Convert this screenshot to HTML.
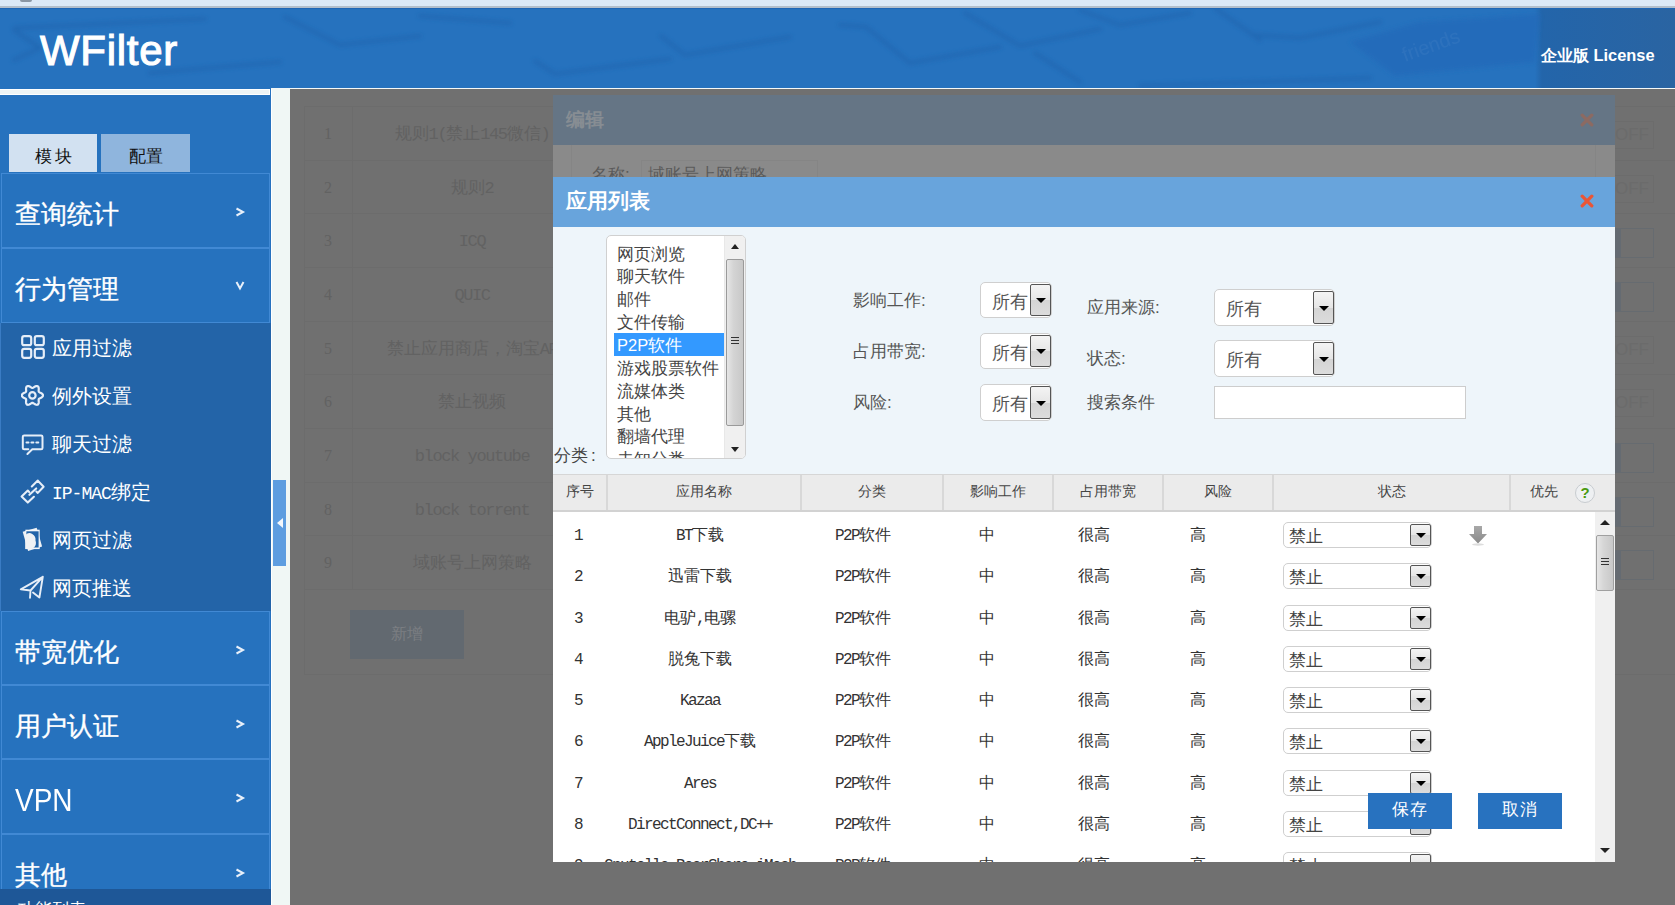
<!DOCTYPE html><html><head><meta charset="utf-8"><style>
*{margin:0;padding:0;box-sizing:border-box}
html,body{width:1675px;height:905px;overflow:hidden;background:#707070;font-family:"Liberation Sans",sans-serif}
.a{position:absolute}
.c{text-align:center;white-space:nowrap}
.l{font-family:"Liberation Mono",monospace;letter-spacing:-1.6px}
.sel{position:absolute;background:#fff;border:1px solid #cfcfcf;border-radius:5px}
.sel .btn{position:absolute;right:0;top:1px;bottom:1px;border:1px solid #555;border-radius:2px;background:linear-gradient(#f4f4f4,#e6e6e6 50%,#d4d4d4 51%,#dcdcdc)}
.sel .btn:after{content:"";position:absolute;left:50%;top:50%;margin-left:-5px;margin-top:-2px;border-left:5px solid transparent;border-right:5px solid transparent;border-top:5px solid #000}
.sel .v{position:absolute;color:#555;font-size:17px;white-space:nowrap}
</style></head><body>
<div class="a" style="left:0;top:0;width:1675px;height:6px;background:#dce9f7"></div>
<div class="a" style="left:0;top:6px;width:1675px;height:2px;background:#b3bfcc"></div>
<div class="a" style="left:20px;top:0;width:12px;height:1.5px;background:#8a96a4;border-radius:0 0 6px 6px"></div>
<div class="a" style="left:0;top:8px;width:1675px;height:80px;background:#2672be;overflow:hidden"><svg class="a" style="left:0;top:0" width="1675" height="80" viewBox="0 8 1675 80"><defs><filter id="bl" x="-10%" y="-50%" width="120%" height="200%"><feGaussianBlur stdDeviation="2"/></filter><linearGradient id="rg" x1="0" x2="1" y1="0" y2="0"><stop offset="0" stop-color="#2365aa" stop-opacity="0.0"/><stop offset="0.05" stop-color="#2365aa" stop-opacity="1"/><stop offset="1" stop-color="#2a64a2"/></linearGradient></defs><rect x="1535" y="8" width="140" height="80" fill="url(#rg)"/><path d="M1350 42 L1395 76 L1535 62 L1540 14 L1420 22 Z" fill="#2268b8" opacity="0.6" filter="url(#bl)"/><text x="1405" y="62" transform="rotate(-20 1405 62)" font-family="Liberation Sans" font-size="20" fill="#fff" opacity="0.045">friends</text><g fill="none" stroke="#1d5ea8" stroke-width="4" opacity="0.45" filter="url(#bl)" stroke-linecap="round"><path d="M14 30 L40 48 L14 60"/><path d="M15 28 L205 19"/><path d="M150 73 L280 62"/><path d="M285 17 L340 45 L420 36"/><path d="M420 16 L510 23"/><path d="M535 61 L555 74 L670 59"/><path d="M661 36 L685 55 L790 37"/><path d="M840 25 L866 27 L910 63 L1000 47"/><path d="M965 13 L1020 46 L1100 29"/><path d="M1080 10 L1120 25 L1190 13"/><path d="M1035 53 L1080 82"/><path d="M1215 8 L1260 40"/><path d="M1255 35 L1300 38 L1380 22"/><path d="M1140 86 L1370 78"/></g></svg><div class="a" style="left:0;top:0;width:1675px;height:1px;background:#1f66b5"></div></div>
<div class="a" style="left:40px;top:24.5px;font:42px/52px 'Liberation Sans';color:#fff;-webkit-text-stroke:1.1px #fff;letter-spacing:0.7px">WFilter</div>
<div class="a" style="left:1541px;top:45px;font:bold 16.4px/20px 'Liberation Sans';color:#fff">企业版 License</div>
<div class="a" style="left:271px;top:88px;width:1404px;height:1px;background:#f4f8f8"></div>
<div class="a" style="left:0;top:88px;width:271px;height:817px;background:#2672be"></div>
<div class="a" style="left:0;top:89px;width:270px;height:6px;background:#eef4f5;border:1px solid #fff;border-left:0"></div>
<div class="a" style="left:271px;top:89px;width:19px;height:816px;background:#f0f7f5;border-left:1px solid #fff"></div>
<div class="a" style="left:273px;top:480px;width:13px;height:86px;background:#5d9de0"></div>
<div class="a" style="left:277px;top:518px;width:0;height:0;border-top:5px solid transparent;border-bottom:5px solid transparent;border-right:6px solid #f4f8fc"></div>
<div class="a c" style="left:9px;top:134px;width:88px;height:38px;background:#d2e1f1;font-size:17px;line-height:45px;color:#111;letter-spacing:3px;text-indent:4px">模块</div>
<div class="a c" style="left:101px;top:134px;width:89px;height:38px;background:#8fb5dd;font-size:17px;line-height:45px;color:#111;text-indent:1px">配置</div>
<div class="a" style="left:1px;top:173px;width:269px;height:75px;border:1px solid #4189d4;background:#2672be"></div>
<div class="a" style="left:15px;top:199px;font-size:25.5px;line-height:30px;color:#fff;white-space:nowrap;-webkit-text-stroke:0.35px #fff">查询统计</div>
<svg class="a" style="left:234px;top:206px" width="12" height="12" viewBox="0 0 12 12"><path d="M2.5 2.5 L9 6 L2.5 9.5" fill="none" stroke="#e8f0fa" stroke-width="2"/></svg>
<div class="a" style="left:1px;top:248px;width:269px;height:75px;border:1px solid #4189d4;background:#2672be"></div>
<div class="a" style="left:15px;top:274px;font-size:25.5px;line-height:30px;color:#fff;white-space:nowrap;-webkit-text-stroke:0.35px #fff">行为管理</div>
<svg class="a" style="left:234px;top:279px" width="12" height="12" viewBox="0 0 12 12"><path d="M2.5 3 L6 9.5 L9.5 3" fill="none" stroke="#e8f0fa" stroke-width="2"/></svg>
<div class="a" style="left:0;top:323px;width:271px;height:288px;background:#2364a8;border-left:1px solid #3a7cc4"></div>
<div class="a" style="left:52px;top:336px;font-size:20px;line-height:24px;color:#fff;white-space:nowrap">应用过滤</div>
<div class="a" style="left:52px;top:384px;font-size:20px;line-height:24px;color:#fff;white-space:nowrap">例外设置</div>
<div class="a" style="left:52px;top:432px;font-size:20px;line-height:24px;color:#fff;white-space:nowrap">聊天过滤</div>
<div class="a" style="left:52px;top:480px;font-size:20px;line-height:24px;color:#fff;white-space:nowrap"><span style="font-family:'Liberation Mono';font-size:18px;letter-spacing:-1px">IP-MAC</span>绑定</div>
<div class="a" style="left:52px;top:528px;font-size:20px;line-height:24px;color:#fff;white-space:nowrap">网页过滤</div>
<div class="a" style="left:52px;top:576px;font-size:20px;line-height:24px;color:#fff;white-space:nowrap">网页推送</div>
<svg class="a" style="left:21px;top:335px" width="24" height="24" viewBox="0 0 24 24"><rect x="1.2" y="1.2" width="9" height="9" rx="2" fill="none" stroke="#e6eef8" stroke-width="2.2"/><rect x="13.8" y="1.2" width="9" height="9" rx="2" fill="none" stroke="#e6eef8" stroke-width="2.2"/><rect x="1.2" y="13.8" width="9" height="9" rx="2" fill="none" stroke="#e6eef8" stroke-width="2.2"/><rect x="13.8" y="13.8" width="9" height="9" rx="2" fill="none" stroke="#e6eef8" stroke-width="2.2"/></svg>
<svg class="a" style="left:21px;top:384px" width="23" height="23" viewBox="0 0 23 23"><path d="M22.00,11.40 L21.86,12.09 L21.44,12.72 L20.83,13.28 L20.09,13.73 L19.34,14.10 L18.67,14.41 L18.15,14.73 L17.81,15.10 L17.65,15.58 L17.64,16.19 L17.71,16.93 L17.76,17.76 L17.74,18.63 L17.57,19.44 L17.22,20.11 L16.70,20.58 L16.03,20.80 L15.28,20.76 L14.49,20.50 L13.73,20.09 L13.04,19.63 L12.43,19.20 L11.89,18.91 L11.40,18.80 L10.91,18.91 L10.37,19.20 L9.76,19.63 L9.07,20.09 L8.31,20.50 L7.52,20.76 L6.77,20.80 L6.10,20.58 L5.58,20.11 L5.23,19.44 L5.06,18.63 L5.04,17.76 L5.09,16.93 L5.16,16.19 L5.15,15.58 L4.99,15.10 L4.65,14.73 L4.13,14.41 L3.46,14.10 L2.71,13.73 L1.97,13.28 L1.36,12.72 L0.94,12.09 L0.80,11.40 L0.94,10.71 L1.36,10.08 L1.97,9.52 L2.71,9.07 L3.46,8.70 L4.13,8.39 L4.65,8.07 L4.99,7.70 L5.15,7.22 L5.16,6.61 L5.09,5.87 L5.04,5.04 L5.06,4.17 L5.23,3.36 L5.58,2.69 L6.10,2.22 L6.77,2.00 L7.52,2.04 L8.31,2.30 L9.07,2.71 L9.76,3.17 L10.37,3.60 L10.91,3.89 L11.40,4.00 L11.89,3.89 L12.43,3.60 L13.04,3.17 L13.73,2.71 L14.49,2.30 L15.28,2.04 L16.03,2.00 L16.70,2.22 L17.22,2.69 L17.57,3.36 L17.74,4.17 L17.76,5.04 L17.71,5.87 L17.64,6.61 L17.65,7.22 L17.81,7.70 L18.15,8.07 L18.67,8.39 L19.34,8.70 L20.09,9.07 L20.83,9.52 L21.44,10.08 L21.86,10.71 Z" fill="none" stroke="#e6eef8" stroke-width="2.2" stroke-width="1.9" stroke-linejoin="round"/><circle cx="11.4" cy="11.4" r="3.2" fill="none" stroke="#e6eef8" stroke-width="2.2" stroke-width="1.7"/></svg>
<svg class="a" style="left:15px;top:427px" width="35" height="35" viewBox="0 0 35 35"><path d="M13.3 22.3 H9.2 Q7.8 22.3 7.8 20.9 V9.8 Q7.8 8.4 9.2 8.4 H26.1 Q27.5 8.4 27.5 9.8 V20.9 Q27.5 22.3 26.1 22.3 H17.3 L12.4 27" fill="none" stroke="#e6eef8" stroke-width="2" stroke-linecap="round" stroke-linejoin="round"/><path d="M11.6 15.5 H13.4 M16.5 15.5 H18.3 M21.4 15.5 H23.2" stroke="#e6eef8" stroke-width="2.2" stroke-linecap="round"/></svg>
<svg class="a" style="left:15px;top:474px" width="35" height="35" viewBox="0 0 35 35"><g fill="none" stroke="#e6eef8" stroke-width="2.1" stroke-linejoin="round" stroke-linecap="round"><path d="M16.8 12.4 L22.8 6.6 L28.6 12.8 L22.8 18.9 L21.4 17.5"/><path d="M14.2 18 L12.8 16.6 L6.6 22.6 L12.8 28.6 L18.9 22.8"/><path d="M14.4 20.8 L21.2 14.4"/></g></svg>
<svg class="a" style="left:15px;top:522px" width="35" height="35" viewBox="0 0 35 35"><path d="M7.7 9.7 L21.7 5.8 L27.1 24.4 L13.1 29 Z" fill="#eef2f6"/><rect x="10.4" y="7.7" width="14.3" height="19.4" fill="#f4f6f8"/><rect x="11.4" y="9.3" width="12.2" height="16.2" fill="#2364a8"/><path d="M10.4 13 A6 6.5 0 0 1 20.5 18.5 A6 6.5 0 0 1 13 27 L10.4 27 Z" fill="#f0f2f4"/></svg>
<svg class="a" style="left:19px;top:575px" width="26" height="25" viewBox="0 0 26 25"><path d="M23.8 1.8 L1.8 14.3 L11.5 15.5 L11 22.8 M11.5 15.5 L23.8 1.8 M14 17.5 L20.4 22.5 L23.8 1.8" fill="none" stroke="#e6eef8" stroke-width="1.9" stroke-linejoin="round" stroke-linecap="round"/></svg>
<div class="a" style="left:1px;top:611px;width:269px;height:74px;border:1px solid #4189d4;background:#2672be"></div>
<div class="a" style="left:15px;top:637px;font-size:25.5px;line-height:30px;color:#fff;white-space:nowrap;-webkit-text-stroke:0.35px #fff">带宽优化</div>
<svg class="a" style="left:234px;top:644px" width="12" height="12" viewBox="0 0 12 12"><path d="M2.5 2.5 L9 6 L2.5 9.5" fill="none" stroke="#e8f0fa" stroke-width="2"/></svg>
<div class="a" style="left:1px;top:685px;width:269px;height:74px;border:1px solid #4189d4;background:#2672be"></div>
<div class="a" style="left:15px;top:711px;font-size:25.5px;line-height:30px;color:#fff;white-space:nowrap;-webkit-text-stroke:0.35px #fff">用户认证</div>
<svg class="a" style="left:234px;top:718px" width="12" height="12" viewBox="0 0 12 12"><path d="M2.5 2.5 L9 6 L2.5 9.5" fill="none" stroke="#e8f0fa" stroke-width="2"/></svg>
<div class="a" style="left:1px;top:759px;width:269px;height:75px;border:1px solid #4189d4;background:#2672be"></div>
<div class="a" style="left:15px;top:782px;font-size:28px;line-height:34px;color:#fff;transform:scaleY(1.1);transform-origin:0 0">VPN</div>
<svg class="a" style="left:234px;top:792px" width="12" height="12" viewBox="0 0 12 12"><path d="M2.5 2.5 L9 6 L2.5 9.5" fill="none" stroke="#e8f0fa" stroke-width="2"/></svg>
<div class="a" style="left:1px;top:834px;width:269px;height:75px;border:1px solid #4189d4;background:#2672be"></div>
<div class="a" style="left:15px;top:860px;font-size:25.5px;line-height:30px;color:#fff;white-space:nowrap;-webkit-text-stroke:0.35px #fff">其他</div>
<svg class="a" style="left:234px;top:867px" width="12" height="12" viewBox="0 0 12 12"><path d="M2.5 2.5 L9 6 L2.5 9.5" fill="none" stroke="#e8f0fa" stroke-width="2"/></svg>
<div class="a" style="left:0;top:889px;width:271px;height:16px;background:#1e5797;overflow:hidden"><div class="a" style="left:18px;top:11px;font-size:17px;line-height:20px;color:#fff">功能列表</div></div>
<div class="a" style="left:290px;top:89px;width:1385px;height:816px;background:#707070;overflow:hidden">
<div class="a" style="left:14px;top:17.0px;width:1400px;height:1px;background:#6c6c6c"></div>
<div class="a" style="left:14px;top:70.7px;width:1400px;height:1px;background:#6c6c6c"></div>
<div class="a" style="left:14px;top:124.3px;width:1400px;height:1px;background:#6c6c6c"></div>
<div class="a" style="left:14px;top:178.0px;width:1400px;height:1px;background:#6c6c6c"></div>
<div class="a" style="left:14px;top:231.7px;width:1400px;height:1px;background:#6c6c6c"></div>
<div class="a" style="left:14px;top:285.4px;width:1400px;height:1px;background:#6c6c6c"></div>
<div class="a" style="left:14px;top:339.0px;width:1400px;height:1px;background:#6c6c6c"></div>
<div class="a" style="left:14px;top:392.7px;width:1400px;height:1px;background:#6c6c6c"></div>
<div class="a" style="left:14px;top:446.4px;width:1400px;height:1px;background:#6c6c6c"></div>
<div class="a" style="left:14px;top:500.0px;width:1400px;height:1px;background:#6c6c6c"></div>
<div class="a" style="left:14px;top:17px;width:1px;height:568px;background:#6c6c6c"></div>
<div class="a" style="left:62px;top:17px;width:1px;height:483px;background:#6c6c6c"></div>
<div class="a c" style="left:18px;top:34.8px;width:40px;font-size:16px;line-height:20px;color:#626262;font-family:'Liberation Serif'">1</div>
<div class="a c" style="left:82px;top:34.8px;width:200px;font-size:17px;line-height:20px;color:#626262">规则<span class="l" style="letter-spacing:-1.4px;font-size:17px">1(</span>禁止<span class="l" style="letter-spacing:-1.4px;font-size:17px">145</span>微信<span class="l" style="letter-spacing:-1.4px;font-size:17px">)</span></div>
<div class="a c" style="left:18px;top:88.5px;width:40px;font-size:16px;line-height:20px;color:#626262;font-family:'Liberation Serif'">2</div>
<div class="a c" style="left:82px;top:88.5px;width:200px;font-size:17px;line-height:20px;color:#626262">规则<span class="l" style="letter-spacing:-1.4px;font-size:17px">2</span></div>
<div class="a c" style="left:18px;top:142.1px;width:40px;font-size:16px;line-height:20px;color:#626262;font-family:'Liberation Serif'">3</div>
<div class="a c" style="left:82px;top:142.1px;width:200px;font-size:17px;line-height:20px;color:#626262"><span class="l" style="letter-spacing:-1.4px;font-size:17px">ICQ</span></div>
<div class="a c" style="left:18px;top:195.8px;width:40px;font-size:16px;line-height:20px;color:#626262;font-family:'Liberation Serif'">4</div>
<div class="a c" style="left:82px;top:195.8px;width:200px;font-size:17px;line-height:20px;color:#626262"><span class="l" style="letter-spacing:-1.4px;font-size:17px">QUIC</span></div>
<div class="a c" style="left:18px;top:249.5px;width:40px;font-size:16px;line-height:20px;color:#626262;font-family:'Liberation Serif'">5</div>
<div class="a c" style="left:82px;top:249.5px;width:200px;font-size:17px;line-height:20px;color:#626262">禁止应用商店，淘宝<span class="l" style="letter-spacing:-1.4px;font-size:17px">AP</span></div>
<div class="a c" style="left:18px;top:303.2px;width:40px;font-size:16px;line-height:20px;color:#626262;font-family:'Liberation Serif'">6</div>
<div class="a c" style="left:82px;top:303.2px;width:200px;font-size:17px;line-height:20px;color:#626262">禁止视频</div>
<div class="a c" style="left:18px;top:356.8px;width:40px;font-size:16px;line-height:20px;color:#626262;font-family:'Liberation Serif'">7</div>
<div class="a c" style="left:82px;top:356.8px;width:200px;font-size:17px;line-height:20px;color:#626262"><span class="l" style="letter-spacing:-1.4px;font-size:17px">block youtube</span></div>
<div class="a c" style="left:18px;top:410.5px;width:40px;font-size:16px;line-height:20px;color:#626262;font-family:'Liberation Serif'">8</div>
<div class="a c" style="left:82px;top:410.5px;width:200px;font-size:17px;line-height:20px;color:#626262"><span class="l" style="letter-spacing:-1.4px;font-size:17px">block torrent</span></div>
<div class="a c" style="left:18px;top:464.2px;width:40px;font-size:16px;line-height:20px;color:#626262;font-family:'Liberation Serif'">9</div>
<div class="a c" style="left:82px;top:464.2px;width:200px;font-size:17px;line-height:20px;color:#626262">域账号上网策略</div>
<div class="a" style="left:14px;top:585px;width:1400px;height:1px;background:#6c6c6c"></div>
<div class="a c" style="left:60px;top:521px;width:114px;height:49px;background:#626970;color:#7b7e82;font-size:16px;line-height:48px">新增</div>
<div class="a" style="left:1320px;top:32.0px;width:44px;height:28px;border:1px solid #6c6c6c;color:#6b6b6b;font:17px/26px 'Liberation Sans';text-indent:4px">OFF</div>
<div class="a" style="left:1320px;top:85.7px;width:44px;height:28px;border:1px solid #6c6c6c;color:#6b6b6b;font:17px/26px 'Liberation Sans';text-indent:4px">OFF</div>
<div class="a" style="left:1320px;top:139.3px;width:44px;height:30px;border:1px solid #666b70"><div class="a" style="left:0;top:0;width:10px;height:28px;background:#656b72"></div></div>
<div class="a" style="left:1320px;top:193.0px;width:44px;height:30px;border:1px solid #666b70"><div class="a" style="left:0;top:0;width:10px;height:28px;background:#656b72"></div></div>
<div class="a" style="left:1320px;top:246.7px;width:44px;height:28px;border:1px solid #6c6c6c;color:#6b6b6b;font:17px/26px 'Liberation Sans';text-indent:4px">OFF</div>
<div class="a" style="left:1320px;top:300.4px;width:44px;height:28px;border:1px solid #6c6c6c;color:#6b6b6b;font:17px/26px 'Liberation Sans';text-indent:4px">OFF</div>
<div class="a" style="left:1320px;top:354.0px;width:44px;height:30px;border:1px solid #666b70"><div class="a" style="left:0;top:0;width:10px;height:28px;background:#656b72"></div></div>
<div class="a" style="left:1320px;top:407.7px;width:44px;height:30px;border:1px solid #666b70"><div class="a" style="left:0;top:0;width:10px;height:28px;background:#656b72"></div></div>
<div class="a" style="left:1320px;top:461.4px;width:44px;height:30px;border:1px solid #666b70"><div class="a" style="left:0;top:0;width:10px;height:28px;background:#656b72"></div></div>
</div>
<div class="a" style="left:553px;top:95px;width:1062px;height:50px;background:#657585"></div>
<div class="a" style="left:566px;top:108px;font:bold 19px/24px 'Liberation Sans';color:#878d93">编辑</div>
<svg class="a" style="left:1580px;top:113px" width="14" height="14" viewBox="0 0 14 14"><path d="M2.2 2.2 L11.8 11.8 M11.8 2.2 L2.2 11.8" stroke="#8c6a62" stroke-width="3.3" stroke-linecap="round"/></svg>
<div class="a" style="left:553px;top:145px;width:1062px;height:32px;background:#8a8a8a;overflow:hidden"><div class="a" style="left:18px;top:0;width:1px;height:40px;background:#858585"></div><div class="a" style="left:88px;top:15px;width:177px;height:30px;border:1px solid #858585"></div><div class="a" style="left:38px;top:18px;font-size:17px;line-height:24px;color:#5a5a5a">名称:</div><div class="a" style="left:95px;top:18px;font-size:17px;line-height:24px;color:#5a5a5a">域账号上网策略</div><div class="a" style="left:1042px;top:0;width:1px;height:40px;background:#858585"></div></div>
<div class="a" style="left:553px;top:177px;width:1062px;height:50px;background:#68a4dc"></div>
<div class="a" style="left:566px;top:189px;font:bold 20.5px/24px 'Liberation Sans';color:#fff">应用列表</div>
<svg class="a" style="left:1580px;top:194px" width="14" height="14" viewBox="0 0 14 14"><path d="M2.2 2.2 L11.8 11.8 M11.8 2.2 L2.2 11.8" stroke="#ea5535" stroke-width="3.3" stroke-linecap="round"/></svg>
<div class="a" style="left:553px;top:227px;width:1062px;height:247px;background:#eef5fa"></div>
<div class="a" style="left:606px;top:235px;width:140px;height:224px;background:#fff;border:1px solid #d0d0d0;border-radius:5px;overflow:hidden">
<div class="a" style="left:10px;top:6.5px;font-size:16.5px;line-height:22px;color:#444;white-space:nowrap">网页浏览</div>
<div class="a" style="left:10px;top:29.4px;font-size:16.5px;line-height:22px;color:#444;white-space:nowrap">聊天软件</div>
<div class="a" style="left:10px;top:52.2px;font-size:16.5px;line-height:22px;color:#444;white-space:nowrap">邮件</div>
<div class="a" style="left:10px;top:75.1px;font-size:16.5px;line-height:22px;color:#444;white-space:nowrap">文件传输</div>
<div class="a" style="left:7px;top:96.6px;width:110px;height:23px;background:#3399ff"></div>
<div class="a" style="left:10px;top:97.9px;font-size:16.5px;line-height:22px;color:#fff;white-space:nowrap">P2P软件</div>
<div class="a" style="left:10px;top:120.8px;font-size:16.5px;line-height:22px;color:#444;white-space:nowrap">游戏股票软件</div>
<div class="a" style="left:10px;top:143.6px;font-size:16.5px;line-height:22px;color:#444;white-space:nowrap">流媒体类</div>
<div class="a" style="left:10px;top:166.5px;font-size:16.5px;line-height:22px;color:#444;white-space:nowrap">其他</div>
<div class="a" style="left:10px;top:189.3px;font-size:16.5px;line-height:22px;color:#444;white-space:nowrap">翻墙代理</div>
<div class="a" style="left:10px;top:212.1px;font-size:16.5px;line-height:22px;color:#444;white-space:nowrap">未知分类</div>
<div class="a" style="left:117px;top:0;width:22px;height:224px;background:#f0f0f0;border-left:1px solid #e8e8e8"></div>
<div class="a" style="left:124px;top:8px;width:0;height:0;border-left:4px solid transparent;border-right:4px solid transparent;border-bottom:5px solid #222"></div>
<div class="a" style="left:124px;top:211px;width:0;height:0;border-left:4px solid transparent;border-right:4px solid transparent;border-top:5px solid #222"></div>
<div class="a" style="left:119px;top:23px;width:18px;height:167px;border:1px solid #9a9a9a;border-radius:2px;background:linear-gradient(90deg,#e6e6e6,#d4d4d4 40%,#c8c8c8)"></div>
<div class="a" style="left:124px;top:101px;width:8px;height:1px;background:#333;box-shadow:0 3px 0 #333,0 6px 0 #333"></div>
</div>
<div class="a" style="left:554px;top:445px;font-size:17px;line-height:22px;color:#444">分类<span style="margin-left:3px">:</span></div>
<div class="a" style="left:853px;top:290px;font-size:17px;line-height:22px;color:#555;white-space:nowrap">影响工作:</div>
<div class="a" style="left:853px;top:341px;font-size:17px;line-height:22px;color:#555;white-space:nowrap">占用带宽:</div>
<div class="a" style="left:853px;top:392px;font-size:17px;line-height:22px;color:#555;white-space:nowrap">风险:</div>
<div class="a" style="left:1087px;top:297px;font-size:17px;line-height:22px;color:#555;white-space:nowrap">应用来源:</div>
<div class="a" style="left:1087px;top:348px;font-size:17px;line-height:22px;color:#555;white-space:nowrap">状态:</div>
<div class="a" style="left:1087px;top:392px;font-size:17px;line-height:22px;color:#555;white-space:nowrap">搜索条件</div>
<div class="sel" style="left:980px;top:282px;width:72px;height:36px"><div class="btn" style="width:21px"></div><div class="v" style="left:11px;top:9px;line-height:20px;font-size:17.5px">所有</div></div>
<div class="sel" style="left:980px;top:333px;width:72px;height:36px"><div class="btn" style="width:21px"></div><div class="v" style="left:11px;top:9px;line-height:20px;font-size:17.5px">所有</div></div>
<div class="sel" style="left:980px;top:384px;width:72px;height:37px"><div class="btn" style="width:21px"></div><div class="v" style="left:11px;top:9px;line-height:20px;font-size:17.5px">所有</div></div>
<div class="sel" style="left:1214px;top:289px;width:121px;height:37px"><div class="btn" style="width:21px"></div><div class="v" style="left:11px;top:9px;line-height:20px;font-size:17.5px">所有</div></div>
<div class="sel" style="left:1214px;top:340px;width:121px;height:37px"><div class="btn" style="width:21px"></div><div class="v" style="left:11px;top:9px;line-height:20px;font-size:17.5px">所有</div></div>
<div class="a" style="left:1214px;top:386px;width:252px;height:33px;background:#fff;border:1px solid #cdcdcd"></div>
<div class="a" style="left:553px;top:474px;width:1062px;height:38px;background:#ebebeb;border-top:1px solid #d6d6d6;border-bottom:2px solid #d2d2d2"></div>
<div class="a c" style="left:520.0px;top:481px;width:120px;font-size:14px;line-height:20px;color:#444">序号</div>
<div class="a" style="left:606px;top:475px;width:2px;height:35px;background:#d8d8d8"></div>
<div class="a c" style="left:644.0px;top:481px;width:120px;font-size:14px;line-height:20px;color:#444">应用名称</div>
<div class="a" style="left:800px;top:475px;width:2px;height:35px;background:#d8d8d8"></div>
<div class="a c" style="left:812.0px;top:481px;width:120px;font-size:14px;line-height:20px;color:#444">分类</div>
<div class="a" style="left:942px;top:475px;width:2px;height:35px;background:#d8d8d8"></div>
<div class="a c" style="left:938.0px;top:481px;width:120px;font-size:14px;line-height:20px;color:#444">影响工作</div>
<div class="a" style="left:1052px;top:475px;width:2px;height:35px;background:#d8d8d8"></div>
<div class="a c" style="left:1048.0px;top:481px;width:120px;font-size:14px;line-height:20px;color:#444">占用带宽</div>
<div class="a" style="left:1162px;top:475px;width:2px;height:35px;background:#d8d8d8"></div>
<div class="a c" style="left:1158.0px;top:481px;width:120px;font-size:14px;line-height:20px;color:#444">风险</div>
<div class="a" style="left:1272px;top:475px;width:2px;height:35px;background:#d8d8d8"></div>
<div class="a c" style="left:1331.5px;top:481px;width:120px;font-size:14px;line-height:20px;color:#444">状态</div>
<div class="a" style="left:1509px;top:475px;width:2px;height:35px;background:#d8d8d8"></div>
<div class="a c" style="left:1484.0px;top:481px;width:120px;font-size:14px;line-height:20px;color:#444">优先</div>
<div class="a c" style="left:1575px;top:483px;width:20px;height:20px;border-radius:50%;background:#eef0f2;border:1px solid #c8ccd0;color:#4a9a10;font:bold 15px/18px 'Liberation Sans'">?</div>
<div class="a" style="left:553px;top:512px;width:1062px;height:350px;background:#fff;overflow:hidden">
<div class="a c" style="left:0;top:13.0px;width:50px;font-size:16px;line-height:20px;color:#333"><span class="l">1</span></div>
<div class="a c" style="left:47px;top:13.0px;width:200px;font-size:16px;line-height:20px;color:#333"><span class="l">BT</span>下载</div>
<div class="a c" style="left:210px;top:13.0px;width:200px;font-size:16px;line-height:20px;color:#333"><span class="l">P2P</span>软件</div>
<div class="a c" style="left:393.5px;top:13.0px;width:80px;font-size:16px;line-height:20px;color:#333">中</div>
<div class="a c" style="left:500.5px;top:13.0px;width:80px;font-size:16px;line-height:20px;color:#333">很高</div>
<div class="a c" style="left:605px;top:13.0px;width:80px;font-size:16px;line-height:20px;color:#333">高</div>
<div class="sel" style="left:730px;top:10px;width:149px;height:26px"><div class="btn" style="width:21px"></div><div class="v" style="left:5px;top:3px;line-height:22px;color:#444">禁止</div></div>
<div class="a c" style="left:0;top:54.3px;width:50px;font-size:16px;line-height:20px;color:#333"><span class="l">2</span></div>
<div class="a c" style="left:47px;top:54.3px;width:200px;font-size:16px;line-height:20px;color:#333">迅雷下载</div>
<div class="a c" style="left:210px;top:54.3px;width:200px;font-size:16px;line-height:20px;color:#333"><span class="l">P2P</span>软件</div>
<div class="a c" style="left:393.5px;top:54.3px;width:80px;font-size:16px;line-height:20px;color:#333">中</div>
<div class="a c" style="left:500.5px;top:54.3px;width:80px;font-size:16px;line-height:20px;color:#333">很高</div>
<div class="a c" style="left:605px;top:54.3px;width:80px;font-size:16px;line-height:20px;color:#333">高</div>
<div class="sel" style="left:730px;top:51px;width:149px;height:26px"><div class="btn" style="width:21px"></div><div class="v" style="left:5px;top:3px;line-height:22px;color:#444">禁止</div></div>
<div class="a c" style="left:0;top:95.6px;width:50px;font-size:16px;line-height:20px;color:#333"><span class="l">3</span></div>
<div class="a c" style="left:47px;top:95.6px;width:200px;font-size:16px;line-height:20px;color:#333">电驴<span class="l">,</span>电骡</div>
<div class="a c" style="left:210px;top:95.6px;width:200px;font-size:16px;line-height:20px;color:#333"><span class="l">P2P</span>软件</div>
<div class="a c" style="left:393.5px;top:95.6px;width:80px;font-size:16px;line-height:20px;color:#333">中</div>
<div class="a c" style="left:500.5px;top:95.6px;width:80px;font-size:16px;line-height:20px;color:#333">很高</div>
<div class="a c" style="left:605px;top:95.6px;width:80px;font-size:16px;line-height:20px;color:#333">高</div>
<div class="sel" style="left:730px;top:93px;width:149px;height:26px"><div class="btn" style="width:21px"></div><div class="v" style="left:5px;top:3px;line-height:22px;color:#444">禁止</div></div>
<div class="a c" style="left:0;top:136.8px;width:50px;font-size:16px;line-height:20px;color:#333"><span class="l">4</span></div>
<div class="a c" style="left:47px;top:136.8px;width:200px;font-size:16px;line-height:20px;color:#333">脱兔下载</div>
<div class="a c" style="left:210px;top:136.8px;width:200px;font-size:16px;line-height:20px;color:#333"><span class="l">P2P</span>软件</div>
<div class="a c" style="left:393.5px;top:136.8px;width:80px;font-size:16px;line-height:20px;color:#333">中</div>
<div class="a c" style="left:500.5px;top:136.8px;width:80px;font-size:16px;line-height:20px;color:#333">很高</div>
<div class="a c" style="left:605px;top:136.8px;width:80px;font-size:16px;line-height:20px;color:#333">高</div>
<div class="sel" style="left:730px;top:134px;width:149px;height:26px"><div class="btn" style="width:21px"></div><div class="v" style="left:5px;top:3px;line-height:22px;color:#444">禁止</div></div>
<div class="a c" style="left:0;top:178.1px;width:50px;font-size:16px;line-height:20px;color:#333"><span class="l">5</span></div>
<div class="a c" style="left:47px;top:178.1px;width:200px;font-size:16px;line-height:20px;color:#333"><span class="l">Kazaa</span></div>
<div class="a c" style="left:210px;top:178.1px;width:200px;font-size:16px;line-height:20px;color:#333"><span class="l">P2P</span>软件</div>
<div class="a c" style="left:393.5px;top:178.1px;width:80px;font-size:16px;line-height:20px;color:#333">中</div>
<div class="a c" style="left:500.5px;top:178.1px;width:80px;font-size:16px;line-height:20px;color:#333">很高</div>
<div class="a c" style="left:605px;top:178.1px;width:80px;font-size:16px;line-height:20px;color:#333">高</div>
<div class="sel" style="left:730px;top:175px;width:149px;height:26px"><div class="btn" style="width:21px"></div><div class="v" style="left:5px;top:3px;line-height:22px;color:#444">禁止</div></div>
<div class="a c" style="left:0;top:219.4px;width:50px;font-size:16px;line-height:20px;color:#333"><span class="l">6</span></div>
<div class="a c" style="left:47px;top:219.4px;width:200px;font-size:16px;line-height:20px;color:#333"><span class="l">AppleJuice</span>下载</div>
<div class="a c" style="left:210px;top:219.4px;width:200px;font-size:16px;line-height:20px;color:#333"><span class="l">P2P</span>软件</div>
<div class="a c" style="left:393.5px;top:219.4px;width:80px;font-size:16px;line-height:20px;color:#333">中</div>
<div class="a c" style="left:500.5px;top:219.4px;width:80px;font-size:16px;line-height:20px;color:#333">很高</div>
<div class="a c" style="left:605px;top:219.4px;width:80px;font-size:16px;line-height:20px;color:#333">高</div>
<div class="sel" style="left:730px;top:216px;width:149px;height:26px"><div class="btn" style="width:21px"></div><div class="v" style="left:5px;top:3px;line-height:22px;color:#444">禁止</div></div>
<div class="a c" style="left:0;top:260.7px;width:50px;font-size:16px;line-height:20px;color:#333"><span class="l">7</span></div>
<div class="a c" style="left:47px;top:260.7px;width:200px;font-size:16px;line-height:20px;color:#333"><span class="l">Ares</span></div>
<div class="a c" style="left:210px;top:260.7px;width:200px;font-size:16px;line-height:20px;color:#333"><span class="l">P2P</span>软件</div>
<div class="a c" style="left:393.5px;top:260.7px;width:80px;font-size:16px;line-height:20px;color:#333">中</div>
<div class="a c" style="left:500.5px;top:260.7px;width:80px;font-size:16px;line-height:20px;color:#333">很高</div>
<div class="a c" style="left:605px;top:260.7px;width:80px;font-size:16px;line-height:20px;color:#333">高</div>
<div class="sel" style="left:730px;top:258px;width:149px;height:26px"><div class="btn" style="width:21px"></div><div class="v" style="left:5px;top:3px;line-height:22px;color:#444">禁止</div></div>
<div class="a c" style="left:0;top:302.0px;width:50px;font-size:16px;line-height:20px;color:#333"><span class="l">8</span></div>
<div class="a c" style="left:47px;top:302.0px;width:200px;font-size:16px;line-height:20px;color:#333"><span class="l">DirectConnect,DC++</span></div>
<div class="a c" style="left:210px;top:302.0px;width:200px;font-size:16px;line-height:20px;color:#333"><span class="l">P2P</span>软件</div>
<div class="a c" style="left:393.5px;top:302.0px;width:80px;font-size:16px;line-height:20px;color:#333">中</div>
<div class="a c" style="left:500.5px;top:302.0px;width:80px;font-size:16px;line-height:20px;color:#333">很高</div>
<div class="a c" style="left:605px;top:302.0px;width:80px;font-size:16px;line-height:20px;color:#333">高</div>
<div class="sel" style="left:730px;top:299px;width:149px;height:26px"><div class="btn" style="width:21px"></div><div class="v" style="left:5px;top:3px;line-height:22px;color:#444">禁止</div></div>
<div class="a c" style="left:0;top:343.2px;width:50px;font-size:16px;line-height:20px;color:#333"><span class="l">9</span></div>
<div class="a c" style="left:47px;top:343.2px;width:200px;font-size:16px;line-height:20px;color:#333"><span class="l">Gnutella,BearShare,iMesh</span></div>
<div class="a c" style="left:210px;top:343.2px;width:200px;font-size:16px;line-height:20px;color:#333"><span class="l">P2P</span>软件</div>
<div class="a c" style="left:393.5px;top:343.2px;width:80px;font-size:16px;line-height:20px;color:#333">中</div>
<div class="a c" style="left:500.5px;top:343.2px;width:80px;font-size:16px;line-height:20px;color:#333">很高</div>
<div class="a c" style="left:605px;top:343.2px;width:80px;font-size:16px;line-height:20px;color:#333">高</div>
<div class="sel" style="left:730px;top:340px;width:149px;height:26px"><div class="btn" style="width:21px"></div><div class="v" style="left:5px;top:3px;line-height:22px;color:#444">禁止</div></div>
<svg class="a" style="left:915px;top:13px" width="20" height="21" viewBox="0 0 20 21"><defs><linearGradient id="ag" x1="0" y1="0" x2="0" y2="1"><stop offset="0" stop-color="#a8a8a8"/><stop offset="1" stop-color="#8a8a8a"/></linearGradient></defs><path d="M6 1 H14 V9 H19 L10 18.5 L1 9 H6 Z" fill="url(#ag)"/><ellipse cx="10" cy="19.5" rx="6" ry="1.2" fill="#ddd"/></svg>
<div class="a" style="left:1042px;top:0;width:20px;height:350px;background:#f0f0f0"></div>
<div class="a" style="left:1047px;top:8px;width:0;height:0;border-left:5px solid transparent;border-right:5px solid transparent;border-bottom:5px solid #222"></div>
<div class="a" style="left:1047px;top:336px;width:0;height:0;border-left:5px solid transparent;border-right:5px solid transparent;border-top:5px solid #222"></div>
<div class="a" style="left:1043px;top:23px;width:18px;height:56px;border:1px solid #a0a0a0;border-radius:2px;background:linear-gradient(90deg,#e6e6e6,#d6d6d6 40%,#c8c8c8)"></div>
<div class="a" style="left:1048px;top:46px;width:8px;height:1px;background:#333;box-shadow:0 3px 0 #333,0 6px 0 #333"></div>
</div>
<div class="a c" style="left:1368px;top:793px;width:84px;height:36px;background:#2872bf;color:#fff;font-size:17px;line-height:34px;letter-spacing:1px">保存</div>
<div class="a c" style="left:1478px;top:793px;width:84px;height:36px;background:#2872bf;color:#fff;font-size:17px;line-height:34px;letter-spacing:1px">取消</div>
</body></html>
